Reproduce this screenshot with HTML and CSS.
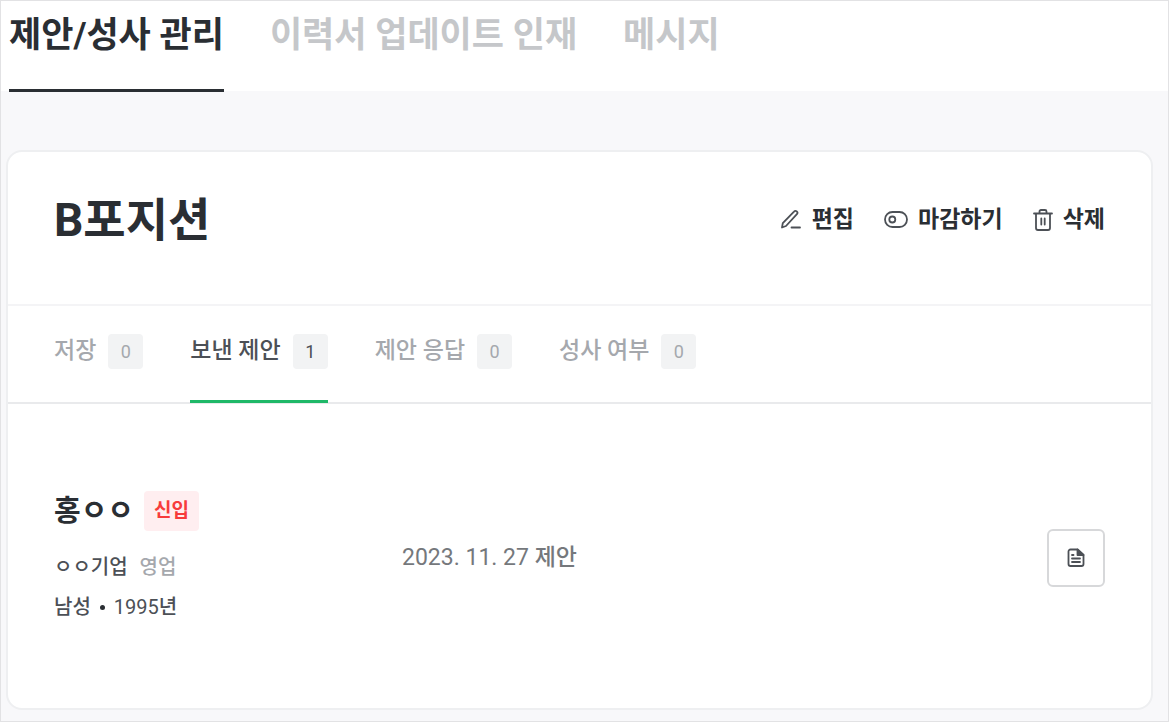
FILE: index.html
```html
<!DOCTYPE html>
<html lang="ko">

<head>
    <meta charset="utf-8">
    <meta name="viewport" content="width=device-width, initial-scale=1.0">
    <title>제안/성사 관리</title>
    <link rel="stylesheet" href="styles.css">
</head>

<body>
    <div class="page">
        <nav class="menu">
            <a href="#" class="active">제안/성사 관리</a>
            <a href="#">이력서 업데이트 인재</a>
            <a href="#">메시지</a>
        </nav>

        <main class="card">
            <div class="card-head">
                <h1>B포지션</h1>
                <div class="actions">
                    <button type="button">
                        <svg width="22" height="22" viewBox="0 0 22 22">
                            <path d="M2 18.500l.8-4.300L14 2.600a1.900 1.900 0 0 1 2.900 2.600L6 17z" />
                            <path d="M11.500 18.500H20" />
                        </svg>
                        편집
                    </button>
                    <button type="button">
                        <svg width="24" height="22" viewBox="0 0 24 22">
                            <rect x="1" y="3" width="22" height="15" rx="7.500" />
                            <circle cx="8.300" cy="10.500" r="3" />
                        </svg>
                        마감하기
                    </button>
                    <button type="button">
                        <svg width="20" height="22" viewBox="0 0 20 22">
                            <path d="M1 4.500h18M6.500 4V2.500A1.500 1.500 0 0 1 8 1h4a1.500 1.500 0 0 1 1.500 1.500V4" />
                            <path d="M3 5v14a2 2 0 0 0 2 2h10a2 2 0 0 0 2-2V5M8.300 9.500v6M11.700 9.500v6" />
                        </svg>
                        삭제
                    </button>
                </div>
            </div>

            <nav class="tabs">
                <a href="#">저장 <span class="count">0</span></a>
                <a href="#" class="active">보낸 제안 <span class="count">1</span></a>
                <a href="#">제안 응답 <span class="count">0</span></a>
                <a href="#">성사 여부 <span class="count">0</span></a>
            </nav>

            <div class="row">
                <div class="person">
                    <div class="name">홍ㅇㅇ <span class="badge">신입</span></div>
                    <div class="info">ㅇㅇ기업 <span class="job">영업</span></div>
                    <div class="info"><span>남성</span><i class="dot"></i><span class="num">1995</span>년</div>
                </div>
                <div class="date"><span class="num">2023. 11. 27</span> 제안</div>
                <button type="button" class="doc" aria-label="이력서 보기">
                    <svg width="18" height="20" viewBox="0 0 18 20">
                        <path d="M10.500 1.500H3.500A2 2 0 0 0 1.500 3.500v12.500a2 2 0 0 0 2 2h11a2 2 0 0 0 2-2V7z" />
                        <path class="fold" d="M10.500 1.500V7h6z" />
                        <path d="M5 7h1.500M5 10.500h8M5 14h8" />
                    </svg>
                </button>
            </div>
        </main>
    </div>
</body>

</html>
```
FILE: styles.css
```css
* {
    box-sizing: border-box;
}

body {
    margin: 0;
    font-family: Roboto, "Noto Sans CJK KR", sans-serif;
    color: #2a2e33;
    background: #f8f8fa;
}

a {
    color: inherit;
    text-decoration: none;
}

button {
    font: inherit;
    color: inherit;
    background: none;
    border: 0;
    padding: 0;
    cursor: pointer;
}

svg {
    fill: none;
    stroke: #4c5056;
    stroke-width: 1.8;
    stroke-linecap: round;
    stroke-linejoin: round;
}

.page {
    min-height: 100vh;
    border: 1px solid #e2e2e4;
}

.menu {
    display: flex;
    gap: 46px;
    height: 90px;
    padding-left: 8px;
    background: #fff;
    font-size: 35px;
    font-weight: 700;
    line-height: 52px;
    color: #c5c7ca;
}

.menu a {
    height: 91px;
    padding-top: 9px;
    white-space: nowrap;
}

.menu .active {
    color: #2a2e33;
    border-bottom: 3px solid #2a2e33;
}

.card {
    margin: 59px 15px 10px 5px;
    background: #fff;
    border: 2px solid #eeeff1;
    border-radius: 16px;
}

.card-head {
    display: flex;
    justify-content: space-between;
    align-items: center;
    padding: 32px 46px 48px;
    border-bottom: 2px solid #f4f4f6;
}

h1 {
    margin: 0;
    font-size: 46px;
    line-height: 72px;
}

.actions {
    display: flex;
    gap: 30px;
    font-size: 23px;
    font-weight: 700;
    line-height: 34px;
}

.actions button {
    display: flex;
    align-items: center;
    gap: 10px;
}

.tabs {
    display: flex;
    gap: 47px;
    height: 98px;
    padding: 0 46px;
    border-bottom: 2px solid #e9eaec;
    font-size: 23px;
    font-weight: 500;
    color: #a5a8ad;
}

.tabs a {
    display: flex;
    gap: 12px;
    height: 97px;
    padding-top: 28px;
    line-height: 34px;
    white-space: nowrap;
}

.tabs .active {
    color: #4c5056;
    border-bottom: 3px solid #1fb868;
}

.count {
    width: 35px;
    height: 35px;
    border-radius: 4px;
    background: #f2f3f4;
    font-size: 18px;
    font-weight: 400;
    line-height: 35px;
    text-align: center;
}

.row {
    display: grid;
    grid-template-columns: 348px 1fr 58px;
    align-items: center;
    padding: 85px 46px 81px;
}

.name {
    display: flex;
    align-items: center;
    gap: 10px;
    margin-bottom: 14px;
    font-size: 29px;
    font-weight: 700;
    line-height: 44px;
}

.badge {
    padding: 0 10px;
    border-radius: 4px;
    background: #ffeef0;
    color: #f73b3b;
    font-size: 19px;
    line-height: 40px;
}

.info {
    display: flex;
    align-items: center;
    font-size: 20px;
    font-weight: 500;
    line-height: 40px;
    color: #4c5056;
}

.job {
    margin-left: 12px;
    color: #a5a8ad;
}

.dot {
    width: 5px;
    height: 5px;
    margin: 0 9px;
    border-radius: 50%;
    background: #2a2e33;
}

.num {
    font-weight: 400;
}

.date {
    font-size: 23px;
    font-weight: 500;
    line-height: 32px;
    color: #75787c;
}

.doc {
    display: flex;
    justify-content: center;
    align-items: center;
    width: 58px;
    height: 58px;
    border: 2px solid #d7d8da;
    border-radius: 6px;
}

.fold {
    fill: #4c5056;
}
```
